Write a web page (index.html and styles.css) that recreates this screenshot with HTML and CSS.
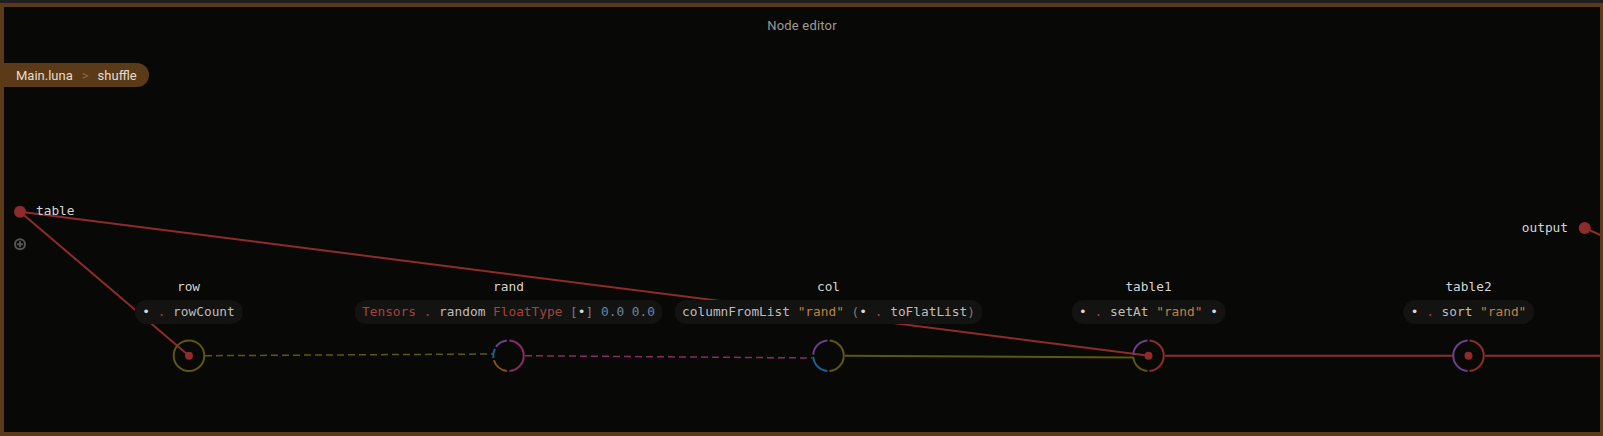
FILE: index.html
```html
<!DOCTYPE html>
<html>
<head>
<meta charset="utf-8">
<title>Node editor</title>
<link rel="stylesheet" href="styles.css">
</head>
<body>
<div class="topbar"></div>
<div class="panel">
  <div class="title">Node editor</div>
  <div class="crumbs"><span class="crumb">Main.luna</span><span class="sep">&gt;</span><span class="crumb cur">shuffle</span></div>
  <div class="canvas">
    <svg class="wires" width="1603" height="436" viewBox="0 0 1603 436">
      <g fill="none" stroke-linecap="butt">
        <line x1="20" y1="211.7" x2="189" y2="355.7" stroke="#8e2b2b" stroke-width="2"/>
        <line x1="20" y1="211.7" x2="1149" y2="355.7" stroke="#8e2b2b" stroke-width="2"/>
        <line x1="205" y1="355.7" x2="493" y2="354" stroke="#5c5810" stroke-width="1.5" stroke-dasharray="7 4"/>
        <line x1="525" y1="355.7" x2="812" y2="358" stroke="#8a2a66" stroke-width="1.5" stroke-dasharray="7 4"/>
        <line x1="845" y1="355.7" x2="1133" y2="357.5" stroke="#5c5810" stroke-width="2"/>
        <line x1="1165" y1="355.7" x2="1453" y2="355.7" stroke="#8e2b2b" stroke-width="2"/>
        <line x1="1485" y1="355.7" x2="1603" y2="355.7" stroke="#8e2b2b" stroke-width="2"/>
        <line x1="1584.7" y1="228" x2="1620" y2="244" stroke="#8e2b2b" stroke-width="2"/>
      </g>
      <!-- row -->
      <g transform="translate(189 355.7)" fill="none" stroke-width="2">
        <circle r="15.3" stroke="#5c5810"/>
        <circle r="4" fill="#8e2b2b" stroke="none"/>
      </g>
      <!-- rand -->
      <g transform="translate(508.5 355.7)" fill="none" stroke-width="2">
        <path d="M0.9 -15.27 A15.3 15.3 0 0 1 0.9 15.27" stroke="#8a2a66"/>
        <path d="M-1.6 -15.2 A15.3 15.3 0 0 0 -12.5 -8.8" stroke="#6b3f8e"/>
        <path d="M-13.6 -7 A15.3 15.3 0 0 0 -15.1 2.5" stroke="#1d5f96"/>
        <path d="M-14.6 4.6 A15.3 15.3 0 0 0 -1.6 15.2" stroke="#8a5416"/>
      </g>
      <!-- col -->
      <g transform="translate(828.5 355.7)" fill="none" stroke-width="2">
        <path d="M0.9 -15.27 A15.3 15.3 0 0 1 0.9 15.27" stroke="#5c5810"/>
        <path d="M-1.07 -15.26 A15.3 15.3 0 0 0 -15.26 -1.07" stroke="#6b3f8e"/>
        <path d="M-15.26 1.07 A15.3 15.3 0 0 0 -1.07 15.26" stroke="#1d5f96"/>
      </g>
      <!-- table1 -->
      <g transform="translate(1148.5 355.7)" fill="none" stroke-width="2">
        <path d="M0.9 -15.27 A15.3 15.3 0 0 1 0.9 15.27" stroke="#8e2b2b"/>
        <path d="M-1.07 -15.26 A15.3 15.3 0 0 0 -15.26 -1.07" stroke="#6b3f8e"/>
        <path d="M-15.26 1.07 A15.3 15.3 0 0 0 -1.07 15.26" stroke="#5c5810"/>
        <circle r="4" fill="#8e2b2b" stroke="none"/>
      </g>
      <!-- table2 -->
      <g transform="translate(1468.5 355.7)" fill="none" stroke-width="2">
        <path d="M0.9 -15.27 A15.3 15.3 0 0 1 0.9 15.27" stroke="#8e2b2b"/>
        <path d="M-0.9 -15.27 A15.3 15.3 0 0 0 -0.9 15.27" stroke="#6b3f8e"/>
        <circle r="4" fill="#8e2b2b" stroke="none"/>
      </g>
      <!-- ports -->
      <circle cx="20" cy="211.7" r="6" fill="#8e2b2b"/>
      <circle cx="1584.7" cy="228" r="6" fill="#8e2b2b"/>
      <g transform="translate(20 244.3)" fill="none" stroke="#555555" stroke-width="2">
        <circle r="5"/>
        <path d="M-3 0 H3 M0 -3 V3"/>
      </g>
    </svg>

    <div class="port-label in-label">table</div>
    <div class="port-label out-label">output</div>

    <div class="node n-row">
      <div class="name">row</div>
      <div class="expr"><span class="w">•</span> <span class="r">.</span> rowCount</div>
    </div>
    <div class="node n-rand">
      <div class="name">rand</div>
      <div class="expr"><span class="r">Tensors</span> <span class="r">.</span> random <span class="r">FloatType</span> <span class="g">[</span><span class="w">•</span><span class="g">]</span> <span class="b">0.0</span> <span class="b">0.0</span></div>
    </div>
    <div class="node n-col">
      <div class="name">col</div>
      <div class="expr">columnFromList <span class="o">"rand"</span> <span class="g">(</span><span class="w">•</span> <span class="r">.</span> toFlatList<span class="g">)</span></div>
    </div>
    <div class="node n-table1">
      <div class="name">table1</div>
      <div class="expr"><span class="w">•</span> <span class="r">.</span> setAt <span class="o">"rand"</span> <span class="w">•</span></div>
    </div>
    <div class="node n-table2">
      <div class="name">table2</div>
      <div class="expr"><span class="w">•</span> <span class="r">.</span> sort <span class="o">"rand"</span></div>
    </div>
  </div>
</div>
</body>
</html>
```
FILE: styles.css
```css
html, body {
  margin: 0;
  padding: 0;
  width: 1603px;
  height: 436px;
  overflow: hidden;
  background: #1e1e1e;
}

.topbar {
  height: 3px;
  background: #1f1f1f;
}

.panel {
  position: relative;
  box-sizing: border-box;
  width: 1603px;
  height: 433px;
  border-style: solid;
  border-color: #5b3a17;
  border-width: 4px 3px 4px 4px;
  background: #080806;
  overflow: hidden;
}

.title {
  position: relative;
  z-index: 2;
  padding-top: 11px;
  height: 16px;
  line-height: 16px;
  text-align: center;
  font-family: Roboto, "Liberation Sans", sans-serif;
  font-size: 13px;
  letter-spacing: 0.2px;
  color: #9b9b9b;
}

.crumbs {
  position: relative;
  z-index: 2;
  margin-top: 29px;
  display: inline-flex;
  align-items: center;
  gap: 9px;
  height: 24px;
  padding: 0 12px 0 12px;
  border-radius: 0 12px 12px 0;
  background: #5b3a17;
  font-family: Roboto, "Liberation Sans", sans-serif;
  font-size: 13px;
  color: #e4dcd0;
}

.crumbs .sep {
  color: #8d6a45;
}

.canvas {
  position: absolute;
  left: -4px;
  top: -4px;
  width: 1603px;
  height: 436px;
  margin-top: -3px;
}

.wires {
  position: absolute;
  left: 0;
  top: 0;
}

.port-label {
  position: absolute;
  font-family: "DejaVu Sans Mono", monospace;
  font-size: 12.8px;
  line-height: 16px;
  color: #d6d6d6;
  white-space: pre;
}

.in-label {
  left: 36px;
  top: 203px;
}

.out-label {
  right: 35px;
  top: 220px;
}

.node {
  position: absolute;
  top: 279px;
  display: flex;
  flex-direction: column;
  align-items: center;
  transform: translateX(-50%);
  font-family: "DejaVu Sans Mono", monospace;
  font-size: 12.8px;
  white-space: pre;
}

.n-row { left: 188.5px; }
.n-rand { left: 508.5px; }
.n-col { left: 828.5px; }
.n-table1 { left: 1148.5px; }
.n-table2 { left: 1468.5px; }

.name {
  line-height: 16px;
  height: 16px;
  color: #d4d4d4;
}

.expr {
  margin-top: 5px;
  height: 24px;
  line-height: 24px;
  padding: 0 8px;
  border-radius: 12px;
  background: #131311;
  color: #bdbdbd;
}

.expr .r { color: #a9423d; }
.expr .w { color: #d8d8d8; }
.expr .g { color: #7c7c7c; }
.expr .b { color: #6787a8; }
.expr .o { color: #c0813f; }
```
